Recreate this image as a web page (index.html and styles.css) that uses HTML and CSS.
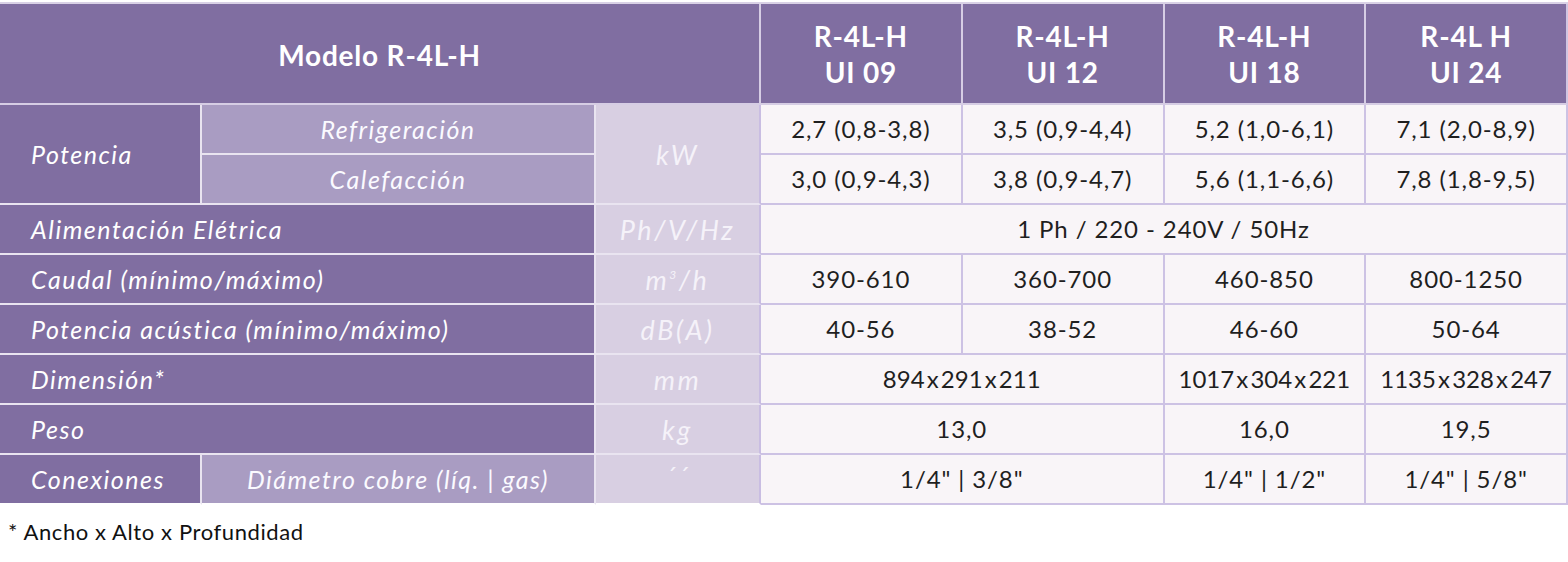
FILE: index.html
```html
<!DOCTYPE html>
<html lang="es">
<head>
<meta charset="utf-8">
<title>Modelo R-4L-H</title>
<link rel="stylesheet" href="styles.css">
</head>
<body>
<table class="spec">
  <colgroup>
    <col class="c-a"><col class="c-b"><col class="c-u">
    <col class="c-d"><col class="c-d"><col class="c-d"><col class="c-d">
  </colgroup>
  <thead>
    <tr class="head">
      <th colspan="3" class="h-main">Modelo R-4L-H</th>
      <th class="h-mod">R-4L-H<br>UI 09</th>
      <th class="h-mod">R-4L-H<br>UI 12</th>
      <th class="h-mod">R-4L-H<br>UI 18</th>
      <th class="h-mod last">R-4L H<br>UI 24</th>
    </tr>
  </thead>
  <tbody>
    <tr>
      <th rowspan="2" class="lab">Potencia</th>
      <th class="sub">Refrigeración</th>
      <td rowspan="2" class="unit">kW</td>
      <td class="val">2,7 (0,8-3,8)</td>
      <td class="val">3,5 (0,9-4,4)</td>
      <td class="val">5,2 (1,0-6,1)</td>
      <td class="val last">7,1 (2,0-8,9)</td>
    </tr>
    <tr>
      <th class="sub">Calefacción</th>
      <td class="val">3,0 (0,9-4,3)</td>
      <td class="val">3,8 (0,9-4,7)</td>
      <td class="val">5,6 (1,1-6,6)</td>
      <td class="val last">7,8 (1,8-9,5)</td>
    </tr>
    <tr>
      <th colspan="2" class="lab">Alimentación Elétrica</th>
      <td class="unit">Ph/V/Hz</td>
      <td colspan="4" class="val last">1 Ph / 220 - 240V / 50Hz</td>
    </tr>
    <tr>
      <th colspan="2" class="lab">Caudal (mínimo/máximo)</th>
      <td class="unit">m<sup>3</sup>/h</td>
      <td class="val">390-610</td>
      <td class="val">360-700</td>
      <td class="val">460-850</td>
      <td class="val last">800-1250</td>
    </tr>
    <tr>
      <th colspan="2" class="lab">Potencia acústica (mínimo/máximo)</th>
      <td class="unit">dB(A)</td>
      <td class="val">40-56</td>
      <td class="val">38-52</td>
      <td class="val">46-60</td>
      <td class="val last">50-64</td>
    </tr>
    <tr>
      <th colspan="2" class="lab">Dimensión*</th>
      <td class="unit">mm</td>
      <td colspan="2" class="val dim">894 x 291 x 211</td>
      <td class="val dim">1017 x 304 x 221</td>
      <td class="val dim last">1135 x 328 x 247</td>
    </tr>
    <tr>
      <th colspan="2" class="lab">Peso</th>
      <td class="unit">kg</td>
      <td colspan="2" class="val">13,0</td>
      <td class="val">16,0</td>
      <td class="val last">19,5</td>
    </tr>
    <tr class="end">
      <th class="lab">Conexiones</th>
      <th class="sub">Diámetro cobre (líq. | gas)</th>
      <td class="unit ticks">´´</td>
      <td colspan="2" class="val">1/4" | 3/8"</td>
      <td class="val">1/4" | 1/2"</td>
      <td class="val last">1/4" | 5/8"</td>
    </tr>
  </tbody>
</table>
<p class="note">* Ancho x Alto x Profundidad</p>
</body>
</html>
```

FILE: styles.css
```css
html, body {
  margin: 0;
  padding: 0;
  background: #ffffff;
}

body {
  padding-top: 2px;
  font-family: Lato, "Open Sans", "DejaVu Sans", sans-serif;
}

.spec {
  width: 1568px;
  border-collapse: separate;
  border-spacing: 0;
  table-layout: fixed;
  border-top: 2px solid #d9d1e6;
}

.c-a { width: 202px; }
.c-b { width: 394px; }
.c-u { width: 165px; }
.c-d { width: 201.75px; }

.spec th,
.spec td {
  padding: 0;
  height: 48px;
  border-right: 2px solid #e9e4f0;
  border-bottom: 2px solid #e9e4f0;
  font-size: 25px;
  font-weight: 400;
  line-height: 1;
  white-space: nowrap;
}

.head th {
  height: 97px;
  background: #806ea1;
  color: #ffffff;
  font-weight: 700;
  font-size: 28px;
  letter-spacing: 0.8px;
  line-height: 36px;
  text-align: center;
  border-right-color: #d6cde4;
  border-bottom-color: #d6cde4;
}

.head .h-main {
  padding-top: 2px;
}

.head .last {
  border-right-color: #cfc5e2;
}

.lab {
  background: #806ea1;
  color: #ffffff;
  font-style: italic;
  letter-spacing: 1.5px;
  text-align: left;
  padding-left: 31px !important;
}

.sub {
  background: #a99cc2;
  color: #fbfaff;
  font-style: italic;
  letter-spacing: 1.5px;
  text-align: center;
}

.unit {
  background: #d8cfe2;
  color: #f5f2f9;
  font-style: italic;
  font-size: 27px !important;
  letter-spacing: 2.5px;
  text-align: center;
  border-right-color: #c9bde2 !important;
}

.unit sup {
  font-size: 12px;
  vertical-align: 11px;
  line-height: 0;
}

.ticks {
  vertical-align: top;
  padding-top: 8px !important;
  height: 40px !important;
}

.val {
  background: #f9f5f8;
  color: #1f1f1f;
  font-size: 24px !important;
  letter-spacing: 0.9px;
  text-align: center;
  border-right-color: #cdc2e4 !important;
  border-bottom-color: #cdc2e4 !important;
}

.dim {
  word-spacing: -4px;
  letter-spacing: 0;
}

.end .lab,
.end .sub,
.end .unit {
  border-bottom-color: #ffffff;
}

.note {
  margin: 13px 0 0 8px;
  font-size: 22px;
  letter-spacing: 0.6px;
  color: #111111;
}
```
